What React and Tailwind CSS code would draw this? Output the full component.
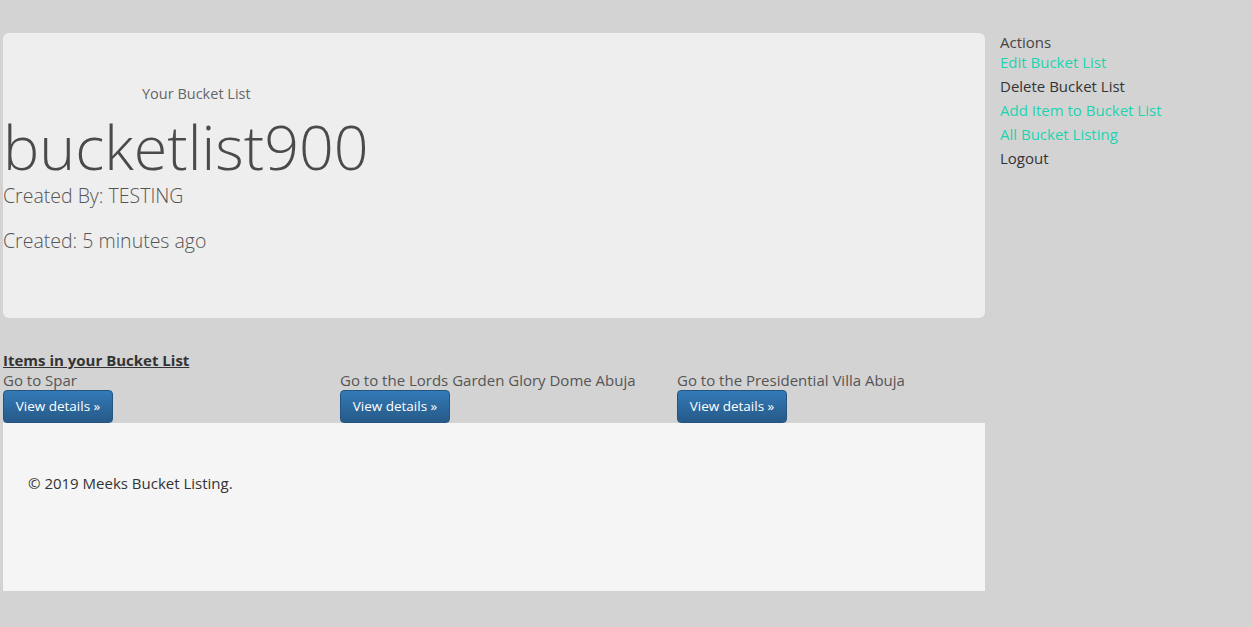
const items = [
  'Go to Spar',
  'Go to the Lords Garden Glory Dome Abuja',
  'Go to the Presidential Villa Abuja',
];

const App = () => {
  return (
    <div className="min-h-[627px] bg-[#d3d3d3] text-[#444] font-['Open_Sans',sans-serif]">
      <div className="flex pt-[33px]">
        <div className="ml-[3px] w-[982px]">
          <div className="h-[285px] rounded-md bg-[#eeeeee] pt-[51px]">
            <p className="pl-[139px] text-[14.5px] leading-5 text-[#666]">Your Bucket List</p>
            <h1 className="mt-[12px] mb-[4px] text-[61px] font-light leading-[62px] text-[#4a4a4a]">bucketlist900</h1>
            <p className="text-[19.5px] font-light leading-[28px] text-[#555]">Created By: TESTING</p>
            <p className="mt-[17px] text-[19.5px] font-light leading-[28px] text-[#555]">Created: 5 minutes ago</p>
          </div>

          <div className="mt-[32px]">
            <h3 className="text-[15px] font-bold leading-5 underline text-[#333]">Items in your Bucket List</h3>
            <div className="grid grid-cols-3 w-[1011px]">
              {items.map((item) => (
                <div key={item}>
                  <p className="pt-px text-[15px] leading-[19px] text-[#555]">{item}</p>
                  <button className="h-[33px] w-[110px] rounded border border-[#245580] bg-gradient-to-b from-[#337ab7] to-[#265a88] text-[13.5px] text-white">
                    View details »
                  </button>
                </div>
              ))}
            </div>
          </div>

          <footer className="h-[168px] bg-[#f5f5f5] px-[25px] pt-[49px]">
            <p className="text-[15px] text-[#333]">© 2019 Meeks Bucket Listing.</p>
          </footer>
        </div>

        <div className="ml-[15px] flex flex-col text-[15px] leading-6">
          <span className="-mt-[3px] text-[#444]">Actions</span>
          <a className="-mt-[4px] text-[#1dd3b0]">Edit Bucket List</a>
          <a className="text-[#333]">Delete Bucket List</a>
          <a className="text-[#1dd3b0]">Add Item to Bucket List</a>
          <a className="text-[#1dd3b0]">All Bucket Listing</a>
          <a className="text-[#333]">Logout</a>
        </div>
      </div>
    </div>
  );
};

export default App;
